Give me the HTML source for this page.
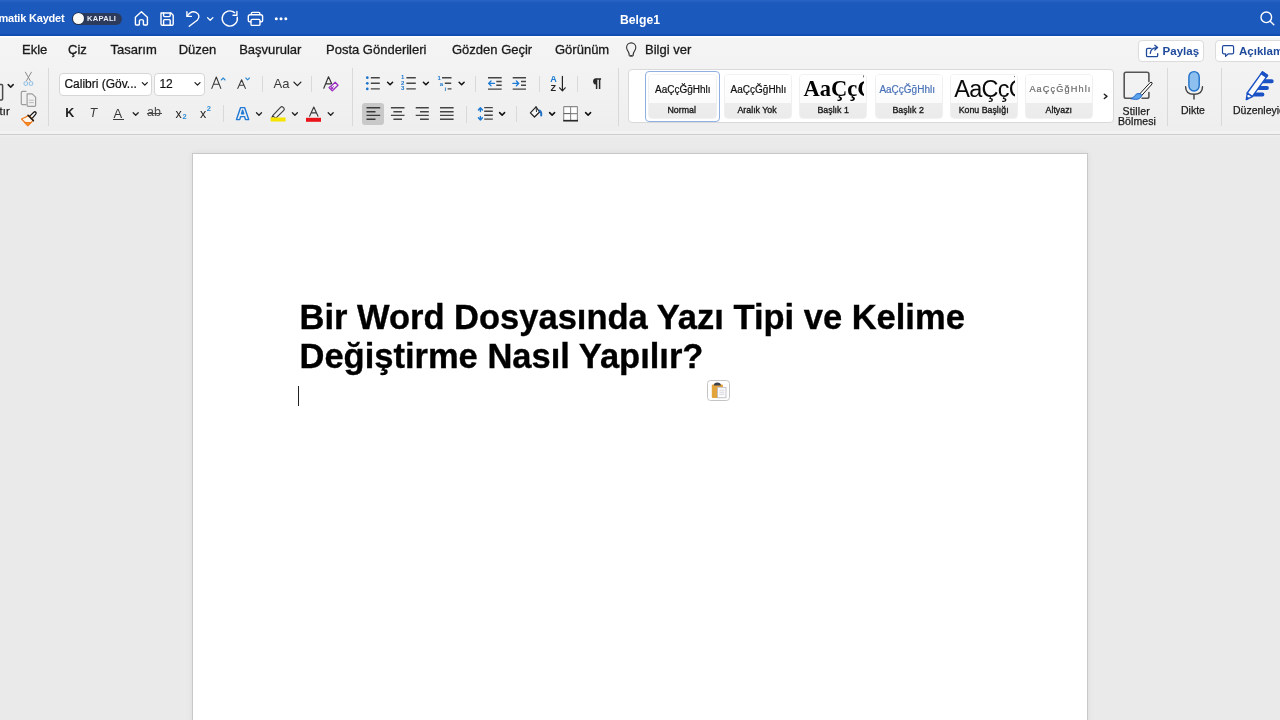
<!DOCTYPE html>
<html><head><meta charset="utf-8">
<style>
html,body{margin:0;padding:0;}
body{will-change:transform;width:1280px;height:720px;overflow:hidden;position:relative;background:#eaeaea;font-family:"Liberation Sans",sans-serif;}
.a{position:absolute;}
.t{position:absolute;white-space:nowrap;line-height:1;}
svg{position:absolute;overflow:visible;}
#titlebar{left:0;top:0;width:1280px;height:34px;background:linear-gradient(#2b66c6 0,#1f5bbd 2px,#1c59bc 6px,#1c59bc 100%);}
#titleline{left:0;top:34px;width:1280px;height:2px;background:#0f4db3;}
#ribbon{left:0;top:36px;width:1280px;height:98px;background:linear-gradient(#fcfcfc 0,#fcfcfc 2px,#f4f4f4 2px,#f1f1f1 60px,#eeeeee 95px,#f2f2f2 95px);}
#ribbonborder{left:0;top:134px;width:1280px;height:1px;background:#cdcdcd;}
#shadow{left:0;top:135px;width:1280px;height:2px;background:linear-gradient(#f0f0f0,#ebebeb);}
.tab{font-size:13px;color:#1a1a1a;-webkit-text-stroke:0.3px #1a1a1a;}
.sep{position:absolute;width:1px;background:#d9d9d9;}
.box{position:absolute;background:#fff;border:1px solid #d6d6d6;border-radius:4px;box-sizing:border-box;}
#page{left:192px;top:153px;width:896px;height:600px;background:#fff;border:1px solid #c8c8c8;box-sizing:border-box;box-shadow:0 0 6px rgba(0,0,0,0.07);}
.tile{top:74.6px;width:66.2px;height:43.8px;border-radius:3px;background:linear-gradient(#ffffff 0,#fbfbfb 28.4px,#ededed 28.4px,#ebebeb 100%);box-shadow:0 0 0 0.6px #e6e6e6;}
.prev{top:84.8px;font-size:10px;color:#111;-webkit-text-stroke:0.2px currentColor;}
.lbl{top:106px;font-size:8.8px;color:#1a1a1a;-webkit-text-stroke:0.35px #1a1a1a;}
.lb2{font-size:10.5px;color:#1a1a1a;-webkit-text-stroke:0.25px #1a1a1a;}
.h{font-size:34.5px;font-weight:bold;color:#000;-webkit-text-stroke:0.35px #000;}
</style></head><body>
<div id="titlebar" class="a"></div>
<div id="titleline" class="a"></div>
<div id="ribbon" class="a"></div>
<div id="ribbonborder" class="a"></div>
<div id="shadow" class="a"></div>

<!-- title bar content -->
<div class="t" id="autosave" style="left:-1.6px;top:13.4px;font-size:11px;letter-spacing:-0.2px;font-weight:bold;color:#fff;">matik Kaydet</div>
<div class="a" style="left:72px;top:12.5px;width:50px;height:12.5px;border-radius:7px;background:#2c3b5c;"></div>
<div class="a" style="left:72.8px;top:13px;width:11.4px;height:11.4px;border-radius:50%;background:#fbfaf6;box-shadow:0 0 0 0.8px #20304e;"></div>
<div class="t" style="left:87px;top:15.3px;font-size:7.5px;font-weight:bold;color:#e8ecf4;letter-spacing:0.3px;">KAPALI</div>

<svg width="1280" height="34" style="left:0;top:0" fill="none" stroke="#fff" stroke-width="1.4" stroke-linecap="round" stroke-linejoin="round">
  <!-- home -->
  <path d="M135.4 17.2 L141.4 11.8 L147.4 17.2 V24.3 Q147.4 25 146.7 25 H144 Q143.4 25 143.4 24.3 V20.8 Q143.4 19.6 141.4 19.6 Q139.4 19.6 139.4 20.8 V24.3 Q139.4 25 138.8 25 H136.1 Q135.4 25 135.4 24.3 Z"/>
  <!-- save -->
  <path d="M161 13 H171 L173.2 15.2 V24 Q173.2 25.2 172 25.2 H162.2 Q161 25.2 161 24 Z"/>
  <path d="M163.6 13 V15.6 Q163.6 16.6 164.6 16.6 H169.2 Q170.2 16.6 170.2 15.6 V13"/>
  <path d="M163.6 25.2 V20.4 Q163.6 19.6 164.4 19.6 H169.4 Q170.2 19.6 170.2 20.4 V25.2"/>
  <!-- undo -->
  <path d="M186.9 11.8 V16.4 H191.4"/>
  <path d="M187.2 16.2 C189.5 12.5 193 11.2 196 12.3 C199.5 13.8 199.8 17.8 197.2 20.2 L189.2 26.2"/>
  <!-- chevron -->
  <path d="M207.5 17.6 L210.2 20.3 L212.9 17.6" stroke-width="1.3"/>
  <!-- redo -->
  <path d="M237.3 17.3 A7.6 7.6 0 1 1 234.6 12.6"/>
  <path d="M236.9 11.4 V15.3 H233"/>
  <!-- print -->
  <path d="M251.4 14.6 V13.3 Q251.4 12.4 252.3 12.4 H258.9 Q259.8 12.4 259.8 13.3 V14.6"/>
  <path d="M250.6 21.8 H249.6 Q248.3 21.8 248.3 20.5 V16.6 Q248.3 14.7 250.2 14.7 H260.7 Q262.6 14.7 262.6 16.6 V20.5 Q262.6 21.8 261.3 21.8 H260.3"/>
  <rect x="251" y="19.4" width="9" height="6" rx="1.2"/>
  <!-- search -->
  <circle cx="1266.3" cy="17.3" r="5.3"/>
  <path d="M1270.2 21.2 L1273.8 24.8"/>
</svg>
<svg width="20" height="6" style="left:273px;top:16px" fill="#fff"><circle cx="3.3" cy="2.7" r="1.5"/><circle cx="8" cy="2.7" r="1.5"/><circle cx="12.8" cy="2.7" r="1.5"/></svg>
<div class="t" id="belge" style="left:620px;top:13.7px;font-size:12.2px;font-weight:bold;color:#fff;">Belge1</div>

<!-- tabs -->
<div class="t tab" id="tEkle" style="left:22px;top:42.8px;">Ekle</div>
<div class="t tab" style="left:68px;top:42.8px;">Çiz</div>
<div class="t tab" style="left:110.5px;top:42.8px;">Tasarım</div>
<div class="t tab" style="left:178.7px;top:42.8px;">Düzen</div>
<div class="t tab" style="left:239.2px;top:42.8px;">Başvurular</div>
<div class="t tab" style="left:326px;top:42.8px;">Posta Gönderileri</div>
<div class="t tab" style="left:452px;top:42.8px;">Gözden Geçir</div>
<div class="t tab" style="left:555px;top:42.8px;">Görünüm</div>
<div class="t tab" style="left:645px;top:42.8px;">Bilgi ver</div>


<!-- ===== RIBBON ===== -->
<!-- clipboard group -->
<svg width="60" height="70" style="left:0;top:64px" fill="none" stroke-linecap="round" stroke-linejoin="round">
  <path d="M-3 20.5 H1.6 Q2.6 20.5 2.6 21.5 V35 Q2.6 36 1.6 36 H-3" stroke="#4a4a4a" stroke-width="1.5"/>
  <path d="M8.2 20.6 L10.7 23.1 L13.2 20.6" stroke="#1e1e1e" stroke-width="1.5"/>
  <!-- scissors -->
  <path d="M25.4 8.2 L30.2 16.6 M31.4 8.2 L26.6 16.6" stroke="#8c8c8c" stroke-width="1"/>
  <circle cx="25.8" cy="19.6" r="1.9" stroke="#93c2e6" stroke-width="1.1"/>
  <circle cx="31" cy="19.6" r="1.9" stroke="#93c2e6" stroke-width="1.1"/>
  <!-- copy -->
  <path d="M26 27.4 H22.4 Q21.3 27.4 21.3 28.5 V39.5 Q21.3 40.6 22.4 40.6 H26" stroke="#9c9c9c" stroke-width="1.2"/>
  <path d="M27.1 29.8 H32.2 L35.6 33.2 V41.3 Q35.6 42.3 34.6 42.3 H28.1 Q27.1 42.3 27.1 41.3 Z" stroke="#9c9c9c" stroke-width="1.2"/>
  <path d="M29.3 36.2 H33.4 M29.3 38.6 H33.4" stroke="#b4b4b4" stroke-width="0.9"/>
  <!-- format painter -->
  <path d="M29.2 51.4 L21.6 55 L27.8 61.6 L33.2 56.4 Z" fill="#fff6ea" stroke="#f07a1e" stroke-width="1.3"/>
  <path d="M24.6 58.4 L27.8 61.6 L31 58.6 Q27.6 58.8 24.6 58.4 Z" fill="#f7a21e" stroke="#f07a1e" stroke-width="1.2"/>
  <path d="M28 51.2 L33.4 56.6" stroke="#1a1a1a" stroke-width="1.5"/>
  <path d="M30.3 51.6 L33.8 48.2 Q34.9 47.3 35.8 48.2 Q36.6 49.1 35.7 50.1 L32.6 53.8" fill="#fff" stroke="#1a1a1a" stroke-width="1.3"/>
</svg>
<div class="t lb2" style="left:-0.5px;top:105.6px;font-size:11px;letter-spacing:0.2px;">tır</div>
<div class="sep" style="left:48px;top:68px;height:58px;"></div>

<!-- font group -->
<div class="box" style="left:58.5px;top:72.5px;width:93.3px;height:23px;"></div>
<div class="t" id="fontname" style="left:64.4px;top:78.1px;font-size:12px;color:#111;-webkit-text-stroke:0.2px #111;">Calibri (Göv...</div>
<div class="box" style="left:154.3px;top:72.5px;width:50.3px;height:23px;"></div>
<div class="t" style="left:159.4px;top:78.1px;font-size:12px;color:#111;-webkit-text-stroke:0.2px #111;">12</div>
<svg width="360" height="70" style="left:0;top:64px" fill="none" stroke-linecap="round" stroke-linejoin="round">
  <path d="M142.3 18.6 L144.8 21.1 L147.3 18.6" stroke="#222" stroke-width="1.3"/>
  <path d="M195 18.6 L197.5 21.1 L200 18.6" stroke="#222" stroke-width="1.3"/>
  <!-- grow font A^ -->
  <path d="M211.8 24.4 L216.3 13 L220.8 24.4 M213.5 20.3 H219.1" stroke="#3a3a3a" stroke-width="1.1"/>
  <path d="M221.3 16 L223.2 14 L225.1 16" stroke="#2a8ad4" stroke-width="1.1"/>
  <!-- shrink font -->
  <path d="M237.8 24.4 L241.6 15.7 L245.4 24.4 M239.3 21.3 H243.9" stroke="#3a3a3a" stroke-width="1.1"/>
  <path d="M245.8 14 L247.6 15.9 L249.4 14" stroke="#2a8ad4" stroke-width="1.1"/>
  <!-- Aa -->
  <path d="M293.9 18.1 L297.4 21.6 L300.9 18.1" stroke="#222" stroke-width="1.3"/>
  <!-- clear formatting -->
  <path d="M323.8 24.2 L328.5 12.8 L331.6 19.6 M325.9 19.8 H331.2" stroke="#333" stroke-width="1.15"/>
  <path d="M335.2 18.3 L338 21.3 L332.3 26.8 L329.3 23.7 Z" fill="#f3f3f3" stroke="#9a2fc2" stroke-width="1.3"/>
  <path d="M330.8 25.3 L333.6 22.6 M329.3 23.7 L332.3 26.8 L333.6 25.5 L330.6 22.4 Z" fill="#d58ee8" stroke="#9a2fc2" stroke-width="1"/>
</svg>
<div class="t" style="left:273.6px;top:77.3px;font-size:13px;color:#3a3a3a;">Aa</div>
<div class="sep" style="left:261.5px;top:76px;height:16px;"></div>
<div class="sep" style="left:311px;top:76px;height:16px;"></div>

<!-- font row 2 -->
<div class="t" style="left:65.3px;top:106.7px;font-size:12.5px;font-weight:bold;color:#1d1d1d;">K</div>
<div class="t" style="left:89.5px;top:106.7px;font-size:12.5px;font-style:italic;color:#3a3a3a;">T</div>
<div class="t" style="left:113.6px;top:106.7px;font-size:13px;color:#3a3a3a;">A</div>
<div class="a" style="left:113.3px;top:119px;width:11px;height:1.2px;background:#3a3a3a;"></div>
<div class="t" style="left:147px;top:106.4px;font-size:12.5px;color:#4a4a4a;">ab</div>
<div class="a" style="left:146.5px;top:113.3px;width:15px;height:1.1px;background:#4a4a4a;"></div>
<div class="t" style="left:175.6px;top:107.5px;font-size:12.5px;color:#1d1d1d;">x</div>
<div class="t" style="left:182.4px;top:113.2px;font-size:7.5px;font-weight:bold;color:#2a8ad4;">2</div>
<div class="t" style="left:200px;top:107.5px;font-size:12.5px;color:#1d1d1d;">x</div>
<div class="t" style="left:206.8px;top:104.6px;font-size:7.5px;font-weight:bold;color:#2a8ad4;">2</div>
<div class="sep" style="left:222.5px;top:105px;height:17px;"></div>
<svg width="360" height="70" style="left:0;top:64px" fill="none" stroke-linecap="round" stroke-linejoin="round">
  <path d="M133.2 48.8 L135.7 51.3 L138.2 48.8" stroke="#222" stroke-width="1.3"/>
  <!-- text effects A -->
  <path d="M236.5 55.6 L240.6 43.6 H244.6 L248.7 55.6 H245.5 L244.6 52.6 H240.6 L239.7 55.6 Z M241.5 49.8 H243.7 L242.6 46.2 Z" stroke="#1f7ad6" stroke-width="1.4"/>
  <path d="M256.5 48.8 L259 51.3 L261.5 48.8" stroke="#222" stroke-width="1.3"/>
  <!-- highlighter -->
  <path d="M272.7 51.6 L280.7 43.2 Q281.8 42.2 282.9 43.2 L283.9 44.2 Q284.8 45.3 283.8 46.3 L275.6 54.4 Z M271.4 54.9 L272.7 51.6 L275.6 54.4 Z" stroke="#3a3a3a" stroke-width="1.1"/>
  <rect x="270.6" y="53.5" width="15" height="4" fill="#f5e400" stroke="none"/>
  <path d="M292.4 48.8 L294.9 51.3 L297.4 48.8" stroke="#222" stroke-width="1.3"/>
  <!-- font color -->
  <path d="M309.6 52.3 L313.8 43 L318 52.3 M311.2 48.9 H316.4" stroke="#3a3a3a" stroke-width="1.1"/>
  <rect x="306" y="53.8" width="15" height="4" fill="#e9151b" stroke="none"/>
  <path d="M328.2 48.8 L330.7 51.3 L333.2 48.8" stroke="#222" stroke-width="1.3"/>
</svg>
<div class="sep" style="left:352px;top:68px;height:58px;"></div>


<!-- paragraph group -->
<svg width="1280" height="70" style="left:0;top:64px" fill="none" stroke-linecap="round" stroke-linejoin="round">
  <!-- bullets -->
  <g fill="#1a73cc" stroke="none"><circle cx="367.3" cy="13.7" r="1.35"/><circle cx="367.3" cy="19.3" r="1.35"/><circle cx="367.3" cy="24.9" r="1.35"/></g>
  <path d="M370.8 13.7 H379.8 M370.8 19.3 H379.8 M370.8 24.9 H379.8" stroke="#454545" stroke-width="1.4" stroke-linecap="butt"/>
  <path d="M387.6 18.2 L390.1 20.7 L392.6 18.2" stroke="#111" stroke-width="1.5"/>
  <!-- numbered -->
  <path d="M406.4 13.7 H415.8 M406.4 19.3 H415.8 M406.4 24.9 H415.8" stroke="#454545" stroke-width="1.4" stroke-linecap="butt"/>
  <path d="M423.4 18.2 L425.9 20.7 L428.4 18.2" stroke="#111" stroke-width="1.5"/>
  <!-- multilevel -->
  <path d="M442 13.7 H451.5 M444.8 19.3 H451.2 M447.6 24.9 H451.5" stroke="#454545" stroke-width="1.4" stroke-linecap="butt"/>
  <path d="M459.1 18.2 L461.6 20.7 L464.1 18.2" stroke="#111" stroke-width="1.5"/>
  <!-- decrease indent -->
  <path d="M488 13.7 H501.7 M496.3 17.5 H501.7 M496.3 21.3 H501.7 M488 25.1 H501.7" stroke="#454545" stroke-width="1.4" stroke-linecap="butt"/>
  <path d="M488.6 19.4 H494.5 M491 17 L488.6 19.4 L491 21.8" stroke="#1a7ad4" stroke-width="1.3"/>
  <!-- increase indent -->
  <path d="M512.7 13.7 H526 M521 17.5 H526 M521 21.3 H526 M512.7 25.1 H526" stroke="#454545" stroke-width="1.4" stroke-linecap="butt"/>
  <path d="M512.9 19.4 H518.8 M516.4 17 L518.8 19.4 L516.4 21.8" stroke="#1a7ad4" stroke-width="1.3"/>
  <!-- sort arrow -->
  <path d="M562.4 12.4 V26.6 M559.6 23.8 L562.4 26.8 L565.2 23.8" stroke="#222" stroke-width="1.2"/>
  <!-- row 2: align -->
  <path d="M366.5 43.8 H380.2 M366.5 47.7 H375.5 M366.5 51.4 H380.2 M366.5 55.3 H375.5" stroke="#454545" stroke-width="1.4" stroke-linecap="butt"/>
  <path d="M390.9 43.8 H404.5 M393.4 47.7 H402 M390.9 51.4 H404.5 M393.4 55.3 H402" stroke="#454545" stroke-width="1.4" stroke-linecap="butt"/>
  <path d="M415.7 43.8 H428.8 M420 47.7 H428.8 M415.7 51.4 H428.8 M420 55.3 H428.8" stroke="#454545" stroke-width="1.4" stroke-linecap="butt"/>
  <path d="M440 43.8 H453.6 M440 47.7 H453.6 M440 51.4 H453.6 M440 55.3 H453.6" stroke="#454545" stroke-width="1.4" stroke-linecap="butt"/>
  <!-- line spacing -->
  <path d="M480.4 44 V47.6 M478.4 46 L480.4 43.8 L482.4 46 M480.4 52.4 V56 M478.4 53.8 L480.4 56 L482.4 53.8" stroke="#1a7ad4" stroke-width="1.4"/>
  <path d="M484.2 43.6 H492.8 M484.2 47.2 H492.8 M484.2 51.2 H492.8 M484.2 55.1 H492.8" stroke="#454545" stroke-width="1.4" stroke-linecap="butt"/>
  <path d="M499.6 48.6 L502.1 51.1 L504.6 48.6" stroke="#111" stroke-width="1.5"/>
  <!-- shading -->
  <path d="M536 42.8 L539.6 48 L534.5 53 L530.4 48.8 Z" fill="#f7f7f7" stroke="#222" stroke-width="1.2"/>
  <path d="M536 42.8 L536.5 47.6" stroke="#333" stroke-width="1"/>
  <path d="M539.6 46.6 Q541.8 47.8 541.2 51.6" stroke="#1d6fc8" stroke-width="1.9"/>
  <path d="M549.6 48.6 L552.1 51.1 L554.6 48.6" stroke="#111" stroke-width="1.5"/>
  <!-- borders -->
  <rect x="563.5" y="42.5" width="14" height="14" fill="#fff" stroke="none"/>
  <path d="M563.7 42.6 H577.4 M563.7 42.6 V56.6 M577.4 42.6 V56.6 M570.6 42.6 V56.6 M570.6 49.6 H577.4" stroke="#8a8a8a" stroke-width="1.1" stroke-linecap="butt"/>
  <path d="M563.7 49.6 H570.6" stroke="#555" stroke-width="1" stroke-linecap="butt"/>
  <path d="M563.2 56.7 H578" stroke="#2a2a2a" stroke-width="1.7" stroke-linecap="butt"/>
  <path d="M585.6 48.6 L588.1 51.1 L590.6 48.6" stroke="#111" stroke-width="1.5"/>
</svg>
<div class="a" style="left:362px;top:103px;width:22px;height:22px;border-radius:3px;background:#c8c8c8;"></div>
<svg width="1280" height="70" style="left:0;top:64px" fill="none">
  <path d="M366.5 43.8 H380.2 M366.5 47.7 H375.5 M366.5 51.4 H380.2 M366.5 55.3 H375.5" stroke="#3a3a3a" stroke-width="1.4"/>
</svg>
<div class="t" style="left:401px;top:75px;font-size:6px;font-weight:bold;color:#1a73cc;line-height:5.6px;">1<br>2<br>3</div>
<div class="t" style="left:437.5px;top:75px;font-size:6px;font-weight:bold;color:#1a73cc;">1</div><div class="t" style="left:439.8px;top:80.6px;font-size:6px;font-weight:bold;color:#1a73cc;">a</div><div class="t" style="left:444.6px;top:86.2px;font-size:6px;font-weight:bold;color:#1a73cc;">i</div>
<div class="t" style="left:550.2px;top:75.2px;font-size:9px;font-weight:bold;color:#1a7ad4;">A</div>
<div class="t" style="left:550.4px;top:83.6px;font-size:9px;font-weight:bold;color:#222;">Z</div>
<svg width="20" height="20" style="left:588px;top:74px"><path d="M8.2 4.3 A3.1 3.1 0 0 0 8.2 10.5 Z" fill="#2a2a2a"/><path d="M8.6 4.3 V15.1 M11.6 4.3 V15.1 M7.8 4.9 H13.1" stroke="#2a2a2a" stroke-width="1.5" fill="none"/></svg>
<div class="sep" style="left:475.3px;top:76px;height:16px;"></div>
<div class="sep" style="left:538.7px;top:76px;height:16px;"></div>
<div class="sep" style="left:577.4px;top:76px;height:16px;"></div>
<div class="sep" style="left:465.8px;top:106px;height:17px;"></div>
<div class="sep" style="left:516.2px;top:106px;height:16px;"></div>
<div class="sep" style="left:617.5px;top:68px;height:58px;"></div>

<!-- styles gallery -->
<div class="box" style="left:628px;top:69px;width:486px;height:54px;border-color:#d9d9d9;border-radius:4px;"></div>
<div class="a" style="left:645px;top:71px;width:75px;height:50.5px;box-sizing:border-box;border:1.5px solid #8fb0e0;border-radius:4px;"></div>
<div class="a tile" style="left:649.4px;"></div>
<div class="a tile" style="left:725.2px;"></div>
<div class="a tile" style="left:800px;"></div>
<div class="a tile" style="left:875.6px;"></div>
<div class="a tile" style="left:951.2px;"></div>
<div class="a tile" style="left:1026.2px;"></div>
<div class="t prev" style="left:655px;">AaÇçĞğHhlı</div>
<div class="t lbl" style="left:667.5px;">Normal</div>
<div class="t prev" style="left:730.6px;">AaÇçĞğHhlı</div>
<div class="t lbl" style="left:737.5px;">Aralık Yok</div>
<div class="a" style="left:801px;top:75px;width:63px;height:28px;overflow:hidden;"><div class="t" style="left:2.5px;top:3.2px;font-family:'Liberation Serif',serif;font-weight:bold;font-size:22.5px;color:#000;">AaÇçĞ</div></div>
<div class="t lbl" style="left:817.5px;">Başlık 1</div>
<div class="t prev" style="left:879.4px;color:#4a72b8;">AaÇçĞğHhlı</div>
<div class="t lbl" style="left:892.5px;">Başlık 2</div>
<div class="a" style="left:952px;top:75px;width:63px;height:28px;overflow:hidden;"><div class="t" style="left:2.2px;top:2.6px;font-size:23.5px;color:#0a0a0a;letter-spacing:-0.7px;">AaÇçĞ</div></div>
<div class="t lbl" style="left:958.7px;">Konu Başlığı</div>
<div class="t prev" style="left:1029.4px;color:#6a6a6a;letter-spacing:1.1px;font-size:9.2px;">AaÇçĞğHhlı</div>
<div class="t lbl" style="left:1045.6px;">Altyazı</div>
<svg width="1280" height="70" style="left:0;top:64px" fill="none" stroke-linecap="round" stroke-linejoin="round">
  <path d="M1104.3 30.3 L1107 32.4 L1104.3 34.5" stroke="#222" stroke-width="1.4"/>
  <!-- stiller bolmesi -->
  <path d="M1135 34.2 H1126 Q1124.2 34.2 1124.2 32.4 V10.1 Q1124.2 8.3 1126 8.3 H1147.1 Q1148.9 8.3 1148.9 10.1 V17.5 M1148.9 28.5 V32.4 Q1148.9 34.2 1147.1 34.2 H1142" stroke="#555" stroke-width="1.6"/>
  <path d="M1139.8 29.8 L1149.6 19.2 Q1151.2 17.6 1152 18.6 Q1152.6 19.6 1151.2 21 L1141.6 31.6 Z" fill="#fff" stroke="#1a1a1a" stroke-width="1"/>
  <path d="M1141.8 31.4 Q1140.5 35.6 1135.5 35.4 Q1133 35.2 1130.8 34.8 Q1133.2 34 1134.6 31.8 Q1136.8 28.4 1139.8 29.6 Z" fill="#5aa2ea" stroke="#1e63c8" stroke-width="0.9"/>
  <!-- mic -->
  <rect x="1188.9" y="7.6" width="10.3" height="19.4" rx="5.15" fill="#8dc0ee" stroke="#1f6fc9" stroke-width="1.4"/>
  <path d="M1185.6 22.8 Q1185.6 30.3 1194 30.3 Q1202.5 30.3 1202.5 22.8 M1194 30.3 V35" stroke="#404040" stroke-width="1.4"/>
  <!-- editor -->
  <path d="M1262 17.25 H1271.8 M1257 24 H1267 M1252.5 30.5 H1262.5" stroke="#1a52c6" stroke-width="3.8"/>
  <path d="M1262.4 7.8 L1267.6 11.4 L1252.3 32.6 L1247.2 29 Z" fill="#fbfbfb" stroke="#1a52c6" stroke-width="1.4"/>
  <path d="M1262.4 7.8 L1267.6 11.4 L1266.3 13.3 L1261.1 9.7 Z" fill="#1a52c6" stroke="#1a52c6" stroke-width="1.2"/>
  <path d="M1247.2 29 L1246.3 35.7 L1252.3 32.6 Z" fill="#fbfbfb" stroke="#1a52c6" stroke-width="1.3"/>
  <path d="M1246.6 33.2 L1246.3 35.7 L1248.6 34.5 Z" fill="#1a52c6" stroke="#1a52c6" stroke-width="1"/>
</svg>
<div class="t lb2" style="left:1122.5px;top:105.5px;letter-spacing:0.15px;">Stiller</div>
<div class="t lb2" style="left:1118px;top:116.2px;letter-spacing:0.1px;">Bölmesi</div>
<div class="sep" style="left:1167px;top:68px;height:58px;"></div>
<div class="t lb2" style="left:1181px;top:105.3px;">Dikte</div>
<div class="sep" style="left:1221.1px;top:68px;height:58px;"></div>
<div class="t lb2" style="left:1233px;top:105.3px;">Düzenleyici</div>

<!-- share & comments -->
<div class="box" style="left:1138.4px;top:40px;width:66px;height:22px;border-color:#dcdcdc;"></div>
<div class="box" style="left:1214.6px;top:40px;width:90px;height:22px;border-color:#dcdcdc;"></div>
<div class="t" style="left:1162.6px;top:45.5px;font-size:11.5px;font-weight:bold;color:#1f4a9c;">Paylaş</div>
<div class="t" style="left:1239px;top:45.5px;font-size:11.5px;font-weight:bold;color:#1f4a9c;">Açıklamalar</div>
<svg width="1280" height="70" style="left:0;top:0" fill="none" stroke-linecap="round" stroke-linejoin="round">
  <path d="M1151 48.3 H1147.8 Q1146.5 48.3 1146.5 49.6 V55.4 Q1146.5 56.6 1147.8 56.6 H1156.4 Q1157.7 56.6 1157.7 55.4 V53.6" stroke="#1f4a9c" stroke-width="1.3"/>
  <path d="M1150.3 53.4 Q1150.6 48 1156.8 47.6 M1154.8 45.3 L1157.6 47.6 L1154.8 50" stroke="#1f4a9c" stroke-width="1.3"/>
  <path d="M1223.8 45.7 H1232.3 Q1233.6 45.7 1233.6 47 V52.5 Q1233.6 53.8 1232.3 53.8 H1228.4 L1225.6 56.4 V53.8 H1223.8 Q1222.5 53.8 1222.5 52.5 V47 Q1222.5 45.7 1223.8 45.7 Z" stroke="#1f4a9c" stroke-width="1.2"/>
</svg>


<svg width="1280" height="70" style="left:0;top:0" fill="none" stroke-linecap="round" stroke-linejoin="round">
  <path d="M629.3 52.3 Q629.3 49.6 627.8 47.6 Q626.6 46 626.6 44.3 A4.6 4.6 0 0 1 635.8 44.3 Q635.8 46 634.6 47.6 Q633.1 49.6 633.1 52.3 Z" stroke="#333" stroke-width="1.1" transform="translate(0,3.2)"/>
  <path d="M629.6 55.2 V55.5 Q629.6 56.4 631.2 56.4 Q632.8 56.4 632.8 55.5 V55.2" stroke="#666" stroke-width="1.4"/>
</svg>

<!-- document page -->
<div id="page" class="a"></div>
<div class="t h" id="h1" style="left:299.5px;top:299.8px;">Bir Word Dosyasında Yazı Tipi ve Kelime</div>
<div class="t h" id="h2" style="left:299.5px;top:339.2px;">Değiştirme Nasıl Yapılır?</div>
<div class="a" style="left:298px;top:386px;width:1.3px;height:20px;background:#222;"></div>


<div class="a" style="left:707px;top:380px;width:22.5px;height:20.5px;box-sizing:border-box;border:1.2px solid #c4c4c4;border-radius:3.5px;background:#fff;"></div>
<svg width="30" height="30" style="left:700px;top:374px">
  <rect x="11.8" y="10.4" width="11.2" height="13.6" rx="1" fill="#e3a43c"/>
  <path d="M13.8 11.6 Q13.8 8.8 17.3 8.6 Q20.9 8.8 20.9 11.6 Z" fill="#3d4450"/>
  <rect x="17.6" y="13.3" width="8.4" height="10.5" fill="#fbfbfb" stroke="#b8b8c4" stroke-width="0.8"/>
  <path d="M19.4 16.2 H24.2 M19.4 18.3 H24.2 M19.4 20.4 H24.2" stroke="#c8c8d4" stroke-width="0.7"/>
</svg>
</body></html>
